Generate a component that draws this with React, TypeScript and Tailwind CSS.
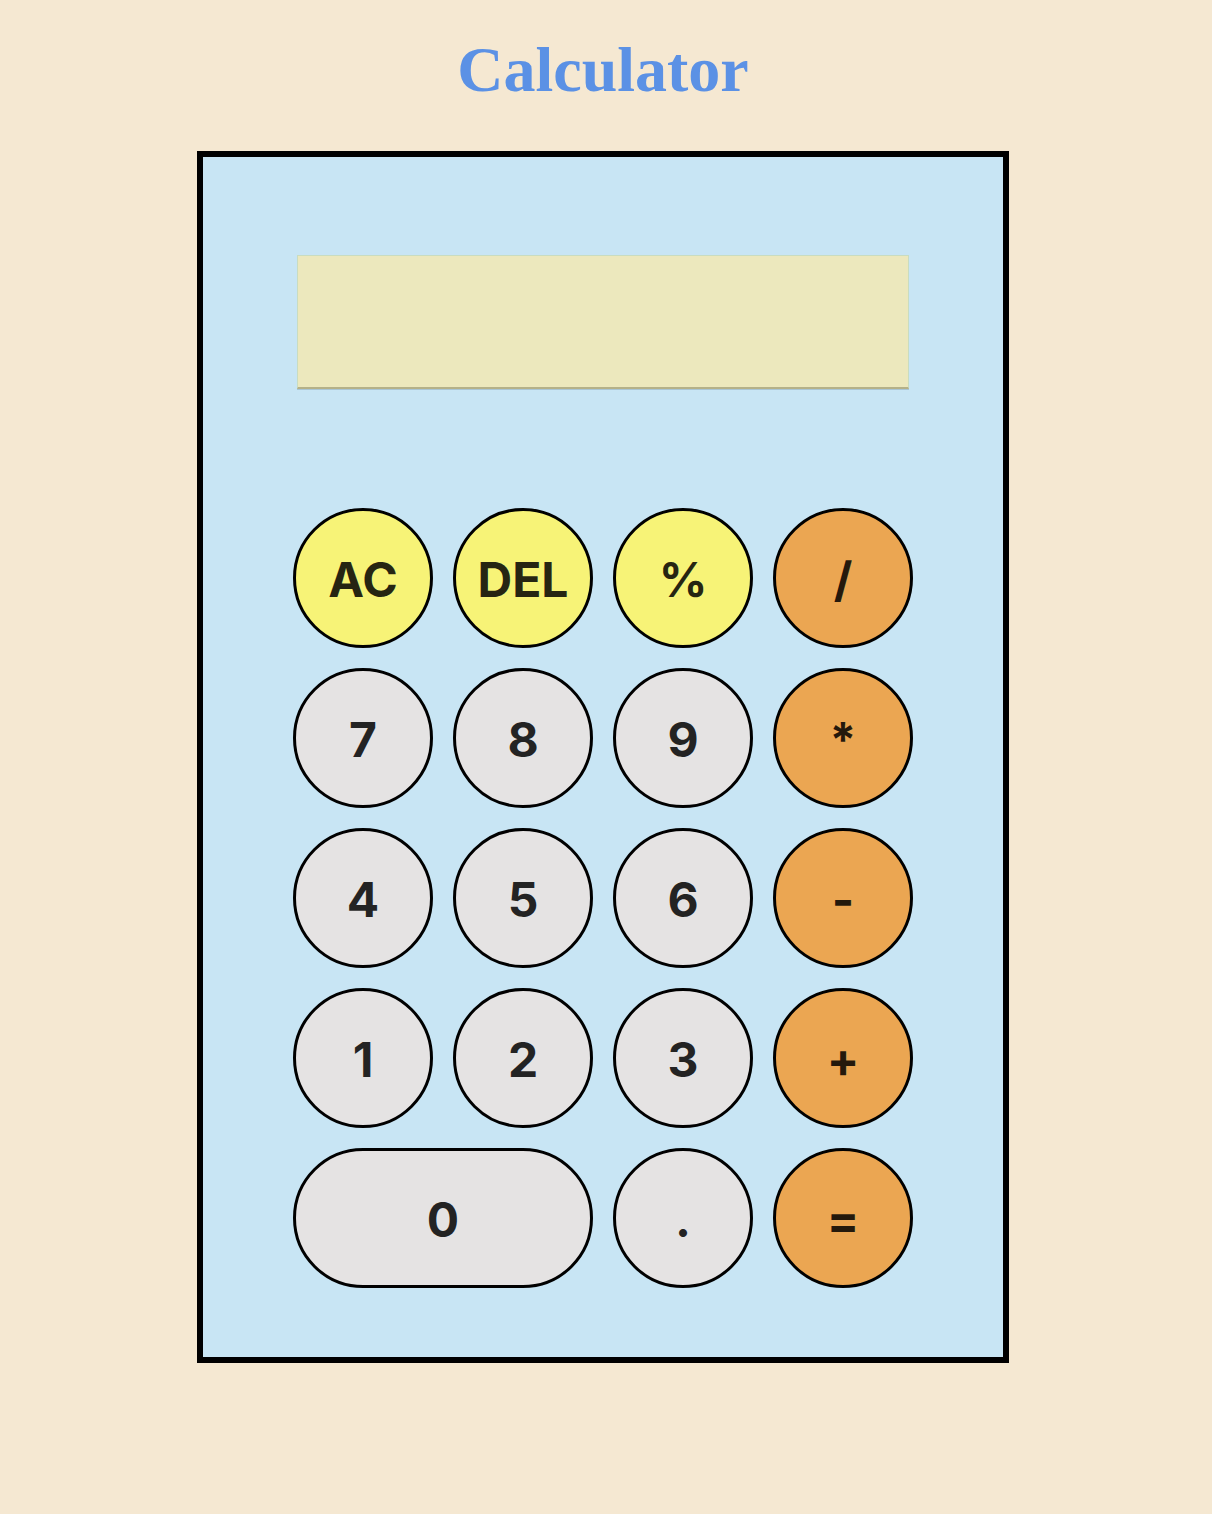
import React from "react";

type Key = { label: string; kind: "fn" | "op" | "num"; wide?: boolean };

const keys: Key[] = [
  { label: "AC", kind: "fn" },
  { label: "DEL", kind: "fn" },
  { label: "%", kind: "fn" },
  { label: "/", kind: "op" },
  { label: "7", kind: "num" },
  { label: "8", kind: "num" },
  { label: "9", kind: "num" },
  { label: "*", kind: "op" },
  { label: "4", kind: "num" },
  { label: "5", kind: "num" },
  { label: "6", kind: "num" },
  { label: "-", kind: "op" },
  { label: "1", kind: "num" },
  { label: "2", kind: "num" },
  { label: "3", kind: "num" },
  { label: "+", kind: "op" },
  { label: "0", kind: "num", wide: true },
  { label: ".", kind: "num" },
  { label: "=", kind: "op" },
];

const bg: Record<Key["kind"], string> = {
  fn: "bg-[#f7f377]",
  op: "bg-[#eba652]",
  num: "bg-[#e5e3e3]",
};

export default function App() {
  return (
    <div className="min-h-[1514px] w-full bg-[#f5e8d2] flex flex-col items-center pt-[38px] pr-[6px]">
      <h1
        className="text-[64px] leading-[64px] font-bold text-[#5b91e5]"
        style={{ fontFamily: '"Liberation Serif", "Times New Roman", serif' }}
      >
        Calculator
      </h1>
      <div className="mt-[49px] w-[812px] h-[1212px] border-[6px] border-black bg-[#c8e5f4] flex flex-col items-center">
        <div className="mt-[98px] w-[612px] h-[134px] bg-[#ece8bd] border border-[#c9dcc0] border-b-[2px] border-b-[#b4b189] shadow-[0_1px_0_#a9c6d6]" />
        <div
          className="mt-[119px] grid grid-cols-[repeat(4,140px)] gap-[20px]"
          style={{ fontFamily: 'Inter, "Liberation Sans", Arial, sans-serif' }}
        >
          {keys.map((k) => (
            <button
              key={k.label}
              className={`${k.wide ? "col-span-2 w-[300px]" : "w-[140px]"} h-[140px] rounded-full border-[3px] border-black ${bg[k.kind]} text-[48px] font-bold text-black/85 flex items-center justify-center leading-none pt-[3px]`}
            >
              {k.label}
            </button>
          ))}
        </div>
      </div>
    </div>
  );
}
